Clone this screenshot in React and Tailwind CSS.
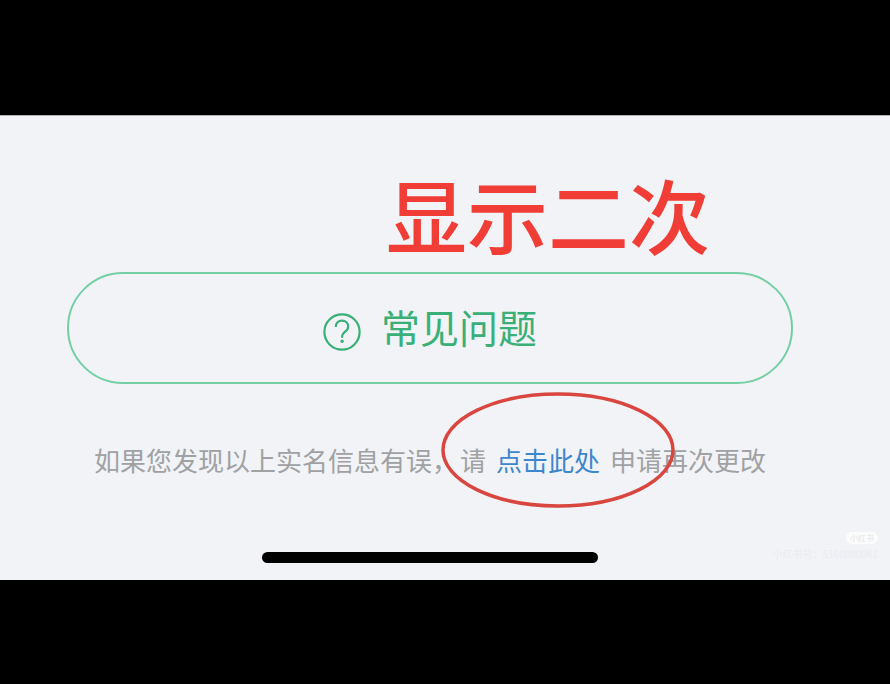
function FaqButton() {
  return (
    <button
      type="button"
      className="flex h-28 w-full items-center justify-center gap-5 rounded-full border-2 border-[#74cfa4] pb-1 text-[39px] leading-none text-[#39b077]"
    >
      <svg viewBox="0 0 38 38" className="mt-3 h-[38px] w-[38px]" fill="none" stroke="currentColor" aria-hidden="true">
        <circle cx="19" cy="19" r="17.6" strokeWidth="2.200" />
        <path d="M12.800 14c0-4 2.600-6.400 6.200-6.400s6.200 2.400 6.200 5.800c0 2.500-1.300 3.900-3.100 5.300-2 1.600-3 2.800-3 5.300v.8" strokeWidth="2.200" />
        <circle cx="19.100" cy="28.200" r="1.700" fill="currentColor" stroke="none" />
      </svg>
      <span>常见问题</span>
    </button>
  );
}

function Notice() {
  return (
    <p className="mt-15 flex justify-center gap-2.5 whitespace-nowrap text-[26px] leading-8 text-[#a0a1a3]">
      <span className="flex gap-0.5">
        <span>如果您发现以上实名信息有误，</span>
        <span>请</span>
      </span>
      <span className="relative">
        <a href="#apply" className="text-[#3d87cc]">点击此处</a>
        {/* hand-drawn marker round the link */}
        <svg
          viewBox="0 0 234 116"
          className="pointer-events-none absolute -left-[55px] -top-[52px] h-[116px] w-[234px] max-w-none"
          fill="none"
          aria-hidden="true"
        >
          <ellipse cx="117" cy="58" rx="115" ry="56" stroke="#d9463f" strokeWidth="3.500" />
        </svg>
      </span>
      <span>申请再次更改</span>
    </p>
  );
}

export default function App() {
  return (
    <div className="flex min-h-screen flex-col justify-center bg-black pb-[104px] pt-[115px] font-['Noto_Sans_CJK_SC',sans-serif]">
      <main className="relative flex grow flex-col border-t border-[#b5aeb4] bg-[#f1f3f7] pb-[17px] pl-[67px] pr-[97px] pt-[53px]">
        <h1 className="mb-[15px] pr-[83px] text-right text-[81px] font-medium leading-[88px] text-[#f03e36]">显示二次</h1>
        <FaqButton />
        <Notice />
        <div className="mx-auto mt-auto h-[11px] w-[336px] rounded-full bg-black" />
        <div className="absolute bottom-5 right-3 flex flex-col items-end gap-1 text-[10px] leading-3 text-[#e9ebef]">
          <span className="rounded-full bg-[#fcfcfd] px-1 text-[8px] text-[#e3e4e7]">小红书</span>
          <span>小红书号：5160880061</span>
        </div>
      </main>
    </div>
  );
}
